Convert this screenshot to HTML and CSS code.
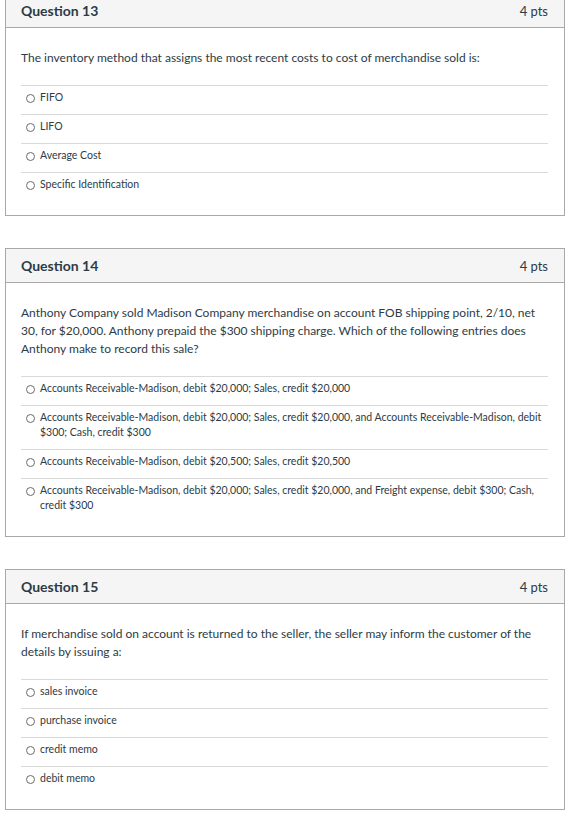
FILE: index.html
```html
<!DOCTYPE html>
<html>
<head>
<meta charset="utf-8">
<link rel="stylesheet" href="styles.css">
</head>
<body>
<div class="page">
  <div class="card">
    <div class="card-header"><span class="q-title">Question 13</span><span class="q-pts">4 pts</span></div>
    <div class="card-body">
      <p class="q-text">The inventory method that assigns the most recent costs to cost of merchandise sold is:</p>
      <div class="answers">
        <div class="answer"><span class="radio"></span><span class="a-text">FIFO</span></div>
        <div class="answer"><span class="radio"></span><span class="a-text">LIFO</span></div>
        <div class="answer"><span class="radio"></span><span class="a-text">Average Cost</span></div>
        <div class="answer"><span class="radio"></span><span class="a-text">Specific Identification</span></div>
      </div>
    </div>
  </div>

  <div class="card">
    <div class="card-header"><span class="q-title">Question 14</span><span class="q-pts">4 pts</span></div>
    <div class="card-body">
      <p class="q-text">Anthony Company sold Madison Company merchandise on account FOB shipping point, 2/10, net 30, for $20,000. Anthony prepaid the $300 shipping charge. Which of the following entries does Anthony make to record this sale?</p>
      <div class="answers">
        <div class="answer"><span class="radio"></span><span class="a-text">Accounts Receivable-Madison, debit $20,000; Sales, credit $20,000</span></div>
        <div class="answer"><span class="radio"></span><span class="a-text">Accounts Receivable-Madison, debit $20,000; Sales, credit $20,000, and Accounts Receivable-Madison, debit $300; Cash, credit $300</span></div>
        <div class="answer"><span class="radio"></span><span class="a-text">Accounts Receivable-Madison, debit $20,500; Sales, credit $20,500</span></div>
        <div class="answer"><span class="radio"></span><span class="a-text">Accounts Receivable-Madison, debit $20,000; Sales, credit $20,000, and Freight expense, debit $300; Cash, credit $300</span></div>
      </div>
    </div>
  </div>

  <div class="card">
    <div class="card-header"><span class="q-title">Question 15</span><span class="q-pts">4 pts</span></div>
    <div class="card-body">
      <p class="q-text">If merchandise sold on account is returned to the seller, the seller may inform the customer of the details by issuing a:</p>
      <div class="answers">
        <div class="answer"><span class="radio"></span><span class="a-text">sales invoice</span></div>
        <div class="answer"><span class="radio"></span><span class="a-text">purchase invoice</span></div>
        <div class="answer"><span class="radio"></span><span class="a-text">credit memo</span></div>
        <div class="answer"><span class="radio"></span><span class="a-text">debit memo</span></div>
      </div>
    </div>
  </div>
</div>
</body>
</html>
```

FILE: styles.css
```css
* { box-sizing: border-box; }
html, body { margin: 0; padding: 0; background: #fff; }
body {
  font-family: Lato, "Noto Sans", "Liberation Sans", sans-serif;
  color: #2d3b45;
}
.page {
  margin-top: -7px;
  padding-left: 5px;
  width: 565px;
}
.card {
  border: 1px solid #a8a8a8;
  margin-bottom: 32px;
}
.card-header {
  height: 34px;
  background: #f5f5f5;
  border-bottom: 1px solid #a8a8a8;
  display: flex;
  align-items: center;
  justify-content: space-between;
  padding: 0 16px 0 15px;
}
.q-title {
  font-size: 14px;
  font-weight: 700;
}
.q-pts {
  font-size: 13px;
}
.card-body {
  padding: 21px 16px 14px 15px;
}
.q-text {
  margin: 0 0 18px;
  font-size: 12px;
  line-height: 18px;
}
.answer {
  border-top: 1px solid #d9d9d9;
  display: flex;
  align-items: flex-start;
  padding: 4px 0 9px;
  font-size: 10.5px;
  line-height: 15px;
}
.radio {
  flex: none;
  width: 9px;
  height: 9px;
  border: 1px solid #6b6b6b;
  border-radius: 50%;
  margin: 4px 5px 0 5px;
}
.a-text {
  flex: 1;
}
```
